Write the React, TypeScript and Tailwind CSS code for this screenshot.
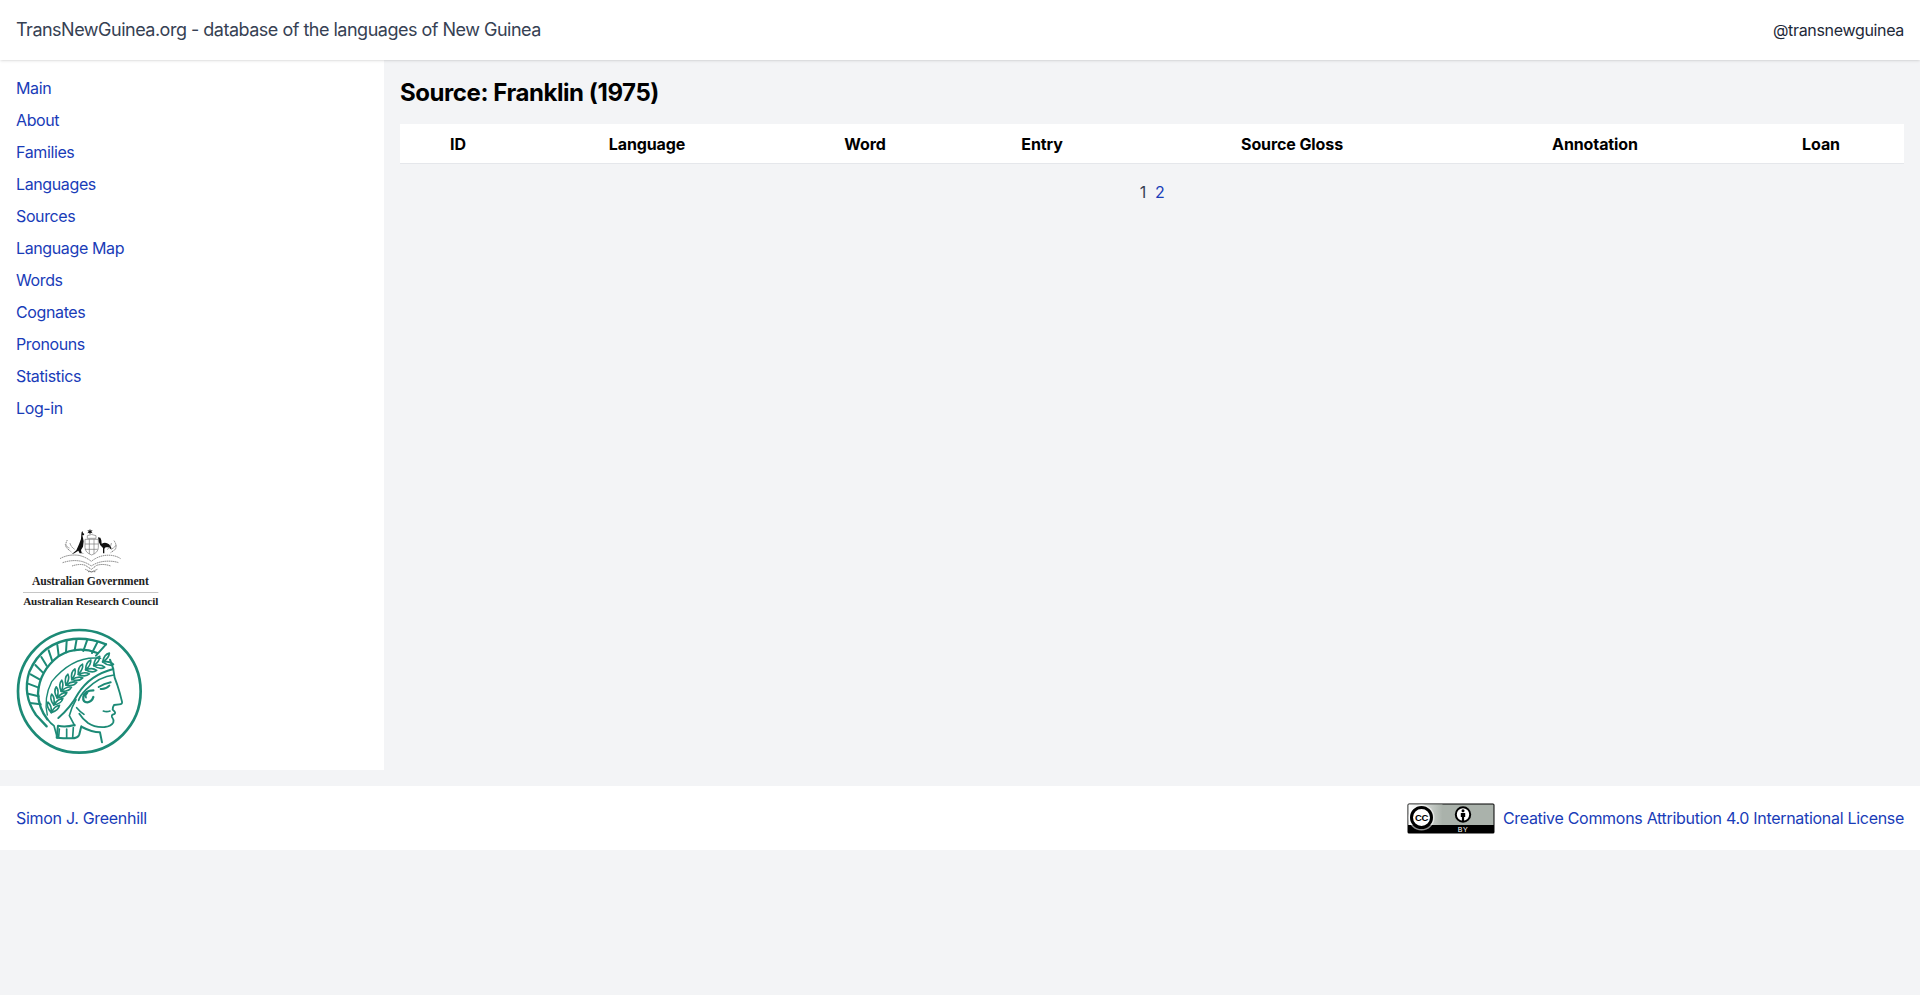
const nav = ["Main","About","Families","Languages","Sources","Language Map","Words","Cognates","Pronouns","Statistics","Log-in"];
const cols: [string, string][] = [["ID","w-[116px]"],["Language","w-[262px]"],["Word","w-[174px]"],["Entry","w-[180px]"],["Source Gloss","w-[320px]"],["Annotation","w-[286px]"],["Loan","w-[166px]"]];

const bez = (t: number, a: number, b: number, c: number) => (1 - t) * (1 - t) * a + 2 * (1 - t) * t * b + t * t * c;
const leaves = Array.from({ length: 10 }, (_, i) => {
  const t = (i + 0.3) / 10;
  const x = bez(t, 122, 150, 298);
  const y = bez(t, 270, 150, 104);
  const dx = bez(t + 0.01, 122, 150, 298) - x;
  const dy = bez(t + 0.01, 270, 150, 104) - y;
  return { x, y, a: (Math.atan2(dy, dx) * 180) / Math.PI };
});

function ArcLogo() {
  return (
    <svg viewBox="0 0 480 270" className="block h-[90px] w-[160px]">
      <g fill="#111">
        <path d="M240 26l2 6 6-2-4 5 4 5-6-2-2 6-2-6-6 2 4-5-4-5 6 2z" />
        <path d="M215 36l3-2 1 5 4 3-2 4h-4l2 8 2 10-2 16-6 10 2 8 8 2h-14l-4-8-12 8-8 3 14-12 8-18 6-16 1-14z" />
        <path d="M264 52l7 1 3 8 1 10q12-6 22 2 8 8 8 16l-10-7h-8l-4 4v14h6-10v-16l-8-8q-6-10-7-24z" />
      </g>
      <g fill="none" stroke="#777" strokeWidth="2">
        <path d="M225 58h40v24q0 16-20 23-20-7-20-23z" />
        <path d="M225 72h40M225 88h38M238 58v44M252 58v44" />
        <path d="M232 47q13-7 26 0v8h-26z" />
      </g>
      <g fill="none" stroke="#777" strokeWidth="3" strokeDasharray="4 2">
        <path d="M172 60q-8 14-2 24l14 12M180 70q4 12 14 18M166 74q6 8 12 10" />
        <path d="M312 62q10 14 4 26l-14 10M304 70q-2 12-12 18M318 76q-6 8-12 10" />
        <path d="M150 116q24-14 56-10 20 4 38 18 20-16 44-18 26-2 44 10" />
        <path d="M158 128q30-10 56-4 16 4 30 14 18-12 40-14 24-2 42 4" />
        <path d="M186 138q24-8 40-2l18 12 16-12q20-6 42 2" />
        <path d="M226 148l18 8 18-8M234 155h22" />
      </g>
      <text x="241" y="196" textAnchor="middle" fontFamily="'Liberation Serif', serif" fontWeight="700" fontSize="35" fill="#222">Australian Government</text>
      <rect x="39" y="216" width="406" height="2" fill="#aaa" />
      <text x="242" y="255" textAnchor="middle" fontFamily="'Liberation Serif', serif" fontWeight="700" fontSize="33.6" fill="#222">Australian Research Council</text>
    </svg>
  );
}

function MpgLogo() {
  const ribs: [number, number, number, number][] = [[262,52,246,84],[232,44,220,78],[200,42,194,76],[170,48,168,82],[142,60,146,92],[116,76,126,106],[94,96,110,122],[76,120,98,142],[62,148,90,164],[54,176,86,188],[54,206,86,214],[60,234,92,238]];
  return (
    <svg viewBox="0 0 420 405" className="block h-[135px] w-[140px]">
      <g fill="none" stroke="#1c8a76" strokeLinecap="round" strokeLinejoin="round">
        <circle cx="208" cy="199" r="184" strokeWidth="8" />
        <path strokeWidth="7" d="M288 58Q240 38 190 42 96 52 58 140 36 210 78 270l32 34" />
        <path strokeWidth="7" d="M262 84Q200 60 145 94 88 138 84 205q2 44 28 78" />
        <path strokeWidth="6" d="M288 58L258 92" />
        {ribs.map((r, i) => <path key={i} strokeWidth="6" d={`M${r[0]} ${r[1]}L${r[2]} ${r[3]}`} />)}
        <path strokeWidth="4" d="M272 100Q190 90 125 170 100 220 112 270" />
        {leaves.map((l, i) => (
          <g key={i} transform={`translate(${l.x} ${l.y}) rotate(${l.a})`}>
            <path strokeWidth="5" d="M0 0Q12 -20 28 -18Q22 -4 0 0" />
            <path strokeWidth="5" d="M0 0Q12 20 28 18Q22 4 0 0" />
          </g>
        ))}
        <path strokeWidth="6" d="M300 104l10 28Q240 150 205 205q-24 44-60 74" />
        <path strokeWidth="5.5" d="M310 134q2 26 12 46 8 24 14 50 2 8-8 8l-16 2q-4 6-4 14l6 6q4 6-4 8-6 2-4 8 6 8 4 16-6 12-26 14-30 2-50-12-16-12-26-28" />
        <path strokeWidth="5" d="M312 150q-44 4-84 44-18 18-22 32" />
        <path strokeWidth="6" d="M266 186q16-10 36-14M272 192q14 2 26-10" />
        <path strokeWidth="5" d="M300 258q-10 4-20 0" />
        <path strokeWidth="7" d="M250 196q-26 0-30 20-2 16 12 16 14-2 18-16" />
        <path strokeWidth="5" d="M232 204q-8 6-4 14" />
        <path strokeWidth="5" d="M222 268q-12-8-22-20M198 224q-14 24-20 48l16 30" />
        <path strokeWidth="6" d="M194 300q-30 8-50 2l-4 36M214 304l-6 24q-4 12-24 12-26 0-44-2" />
        <path strokeWidth="6" d="M216 306q30 16 54 16l6 30" />
        <path strokeWidth="5" d="M148 312l-2 24M170 312v26M190 308l-2 30M112 282q10 14 20 20l10 36" />
      </g>
    </svg>
  );
}

function CcBadge() {
  return (
    <svg viewBox="0 0 88 31" className="block h-[31px] w-[88px]">
      <defs>
        <linearGradient id="cc-fade" x1="0" x2="1" y1="0" y2="0">
          <stop offset="0" stopColor="#ffffff" />
          <stop offset="1" stopColor="#aab2ab" />
        </linearGradient>
      </defs>
      <rect x="0.5" y="0.5" width="87" height="30" rx="1.5" fill="#000" />
      <rect x="1.5" y="1.5" width="85" height="20.5" fill="#aab2ab" />
      <rect x="1.5" y="1.5" width="34" height="20.5" fill="url(#cc-fade)" />
      <circle cx="14.5" cy="14.5" r="13" fill="#fff" fillOpacity="0.55" />
      <circle cx="14.5" cy="14.5" r="10" fill="#fff" stroke="#000" strokeWidth="3" />
      <text x="14.5" y="18" textAnchor="middle" fontFamily="'Liberation Sans', sans-serif" fontWeight="700" fontSize="9.5" letterSpacing="-0.3" fill="#000">CC</text>
      <circle cx="56" cy="11.5" r="7.2" fill="#fff" stroke="#000" strokeWidth="2" />
      <circle cx="56" cy="7.8" r="1.5" fill="#000" />
      <path d="M53.8 10h4.4v4h-1.1v4h-2.2v-4h-1.1z" fill="#000" />
      <text x="56" y="29.2" textAnchor="middle" fontFamily="'Liberation Sans', sans-serif" fontSize="7" letterSpacing="0.5" fill="#fff">BY</text>
    </svg>
  );
}

export default function App() {
  return (
    <div className="min-h-[995px] bg-gray-100 font-['Inter',sans-serif] text-base tracking-[-0.3px] text-gray-800">
      <header className="relative z-10 flex h-[60px] items-center justify-between bg-white px-4 shadow">
        <span className="text-lg tracking-[-0.5px] text-gray-700">TransNewGuinea.org - database of the languages of New Guinea</span>
        <span className="tracking-[-0.33px]">@transnewguinea</span>
      </header>
      <div className="flex h-[710px]">
        <aside className="flex w-[384px] shrink-0 flex-col justify-between bg-white px-4 pt-4 pb-[10px]">
          <nav className="flex flex-col tracking-[-0.38px]">
            {nav.map((n) => (
              <a key={n} className="h-8 leading-6 text-blue-800">{n}</a>
            ))}
          </nav>
          <div className="flex flex-col">
            <div className="-ml-1.5 mb-[15px]"><ArcLogo /></div>
            <div className="-ml-1.5"><MpgLogo /></div>
          </div>
        </aside>
        <main className="flex-1 px-4 pt-[17px]">
          <h1 className="mb-[15px] text-2xl leading-8 font-bold tracking-[-0.43px] text-black">Source: Franklin (1975)</h1>
          <div className="flex h-10 items-center border-b border-gray-200 bg-white font-bold tracking-[-0.1px] text-black">
            {cols.map(([c, w]) => (
              <div key={c} className={`${w} text-center`}>{c}</div>
            ))}
          </div>
          <div className="mt-[16px] flex justify-center gap-[9px] leading-6">
            <span className="text-gray-700">1</span>
            <a className="text-blue-800">2</a>
          </div>
        </main>
      </div>
      <footer className="mt-4 flex h-16 items-center justify-between bg-white px-4">
        <a className="text-blue-800">Simon J. Greenhill</a>
        <div className="flex items-center gap-2">
          <CcBadge />
          <a className="text-blue-800">Creative Commons Attribution 4.0 International License</a>
        </div>
      </footer>
    </div>
  );
}
